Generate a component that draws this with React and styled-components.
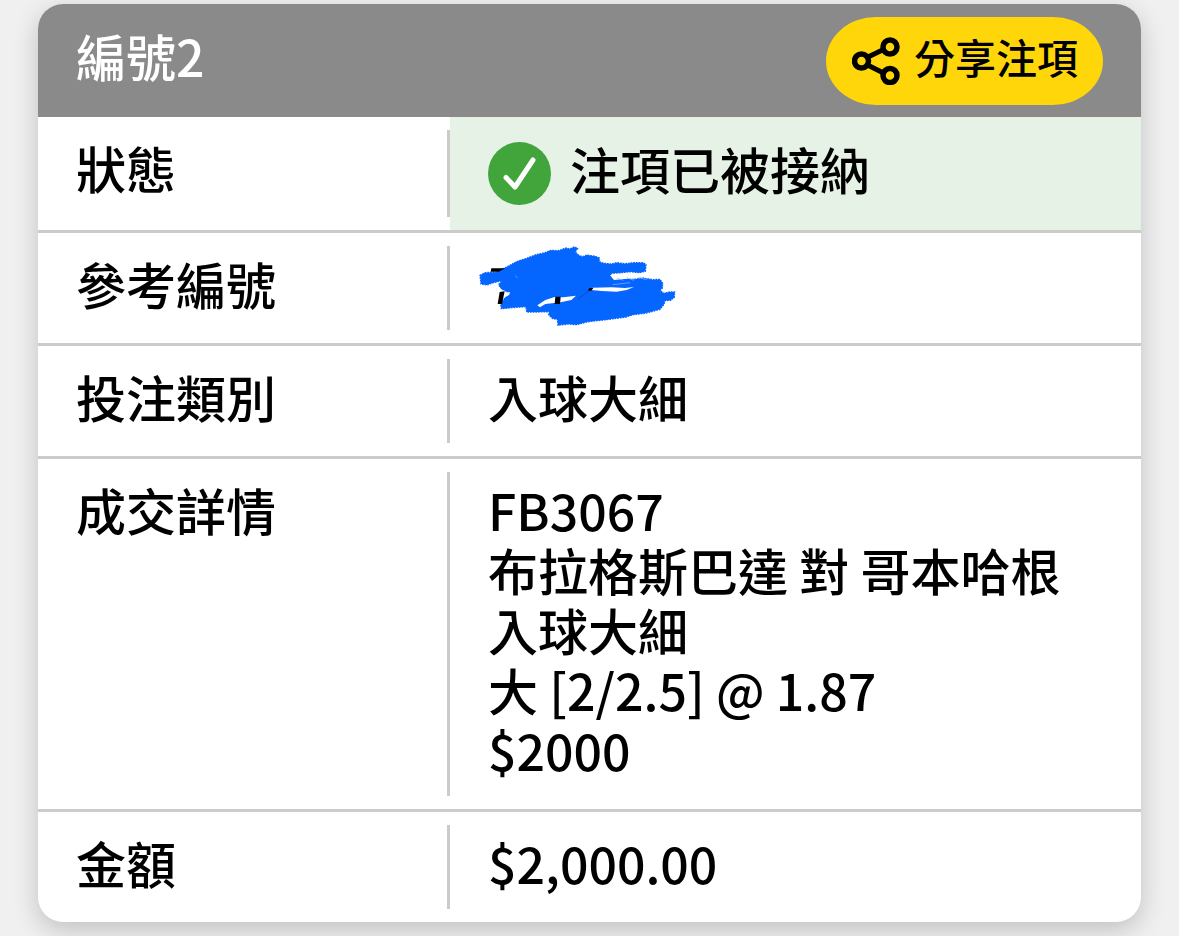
import React from 'react';
import styled, { createGlobalStyle } from 'styled-components';

const GlobalStyle = createGlobalStyle`
  * {
    box-sizing: border-box;
  }

  body {
    margin: 0;
    background: #f0f0f0;
    color: #000;
    font-family: "Noto Sans CJK TC", "Noto Sans", sans-serif;
    font-size: 50px;
    font-weight: 500;
    line-height: 60px;
  }
`;

const Page = styled.main`
  padding: 4px 38px 14px;
`;

const Card = styled.section`
  overflow: hidden;
  border-radius: 25px;
  background: #fff;
  box-shadow: 0 8px 26px rgba(0, 0, 0, 0.2);
`;

const CardHeader = styled.header`
  display: flex;
  justify-content: space-between;
  align-items: flex-start;
  padding: 13px 38px 12px;
  background: #8a8a8a;
`;

const CardTitle = styled.h1`
  margin: 0;
  padding-top: 8px;
  color: #fff;
  font-size: 50px;
  font-weight: 500;
`;

const ShareButton = styled.button`
  display: flex;
  align-items: center;
  gap: 14px;
  height: 88px;
  padding: 0 25px 0 26px;
  border: 0;
  border-radius: 50px / 44px;
  background: #ffd60a;
  color: #000;
  font: inherit;
  font-size: 41px;
  cursor: pointer;
`;

const ShareLabel = styled.span`
  padding-bottom: 10px;
`;

const BetTable = styled.table`
  width: 100%;
  border-spacing: 0;
  table-layout: fixed;

  tr:last-child > * {
    border-bottom: 0;
  }
`;

const Label = styled.th`
  width: 412px;
  padding: 20px 20px 30px 38px;
  border-bottom: 3px solid #cbcbcb;
  /* the divider stops short of the row borders */
  background: linear-gradient(#cbcbcb, #cbcbcb) no-repeat right center / 3px calc(100% - 26px);
  background-origin: padding-box;
  font-weight: 500;
  text-align: left;
  vertical-align: top;
`;

const Value = styled.td`
  padding: ${(props) => (props.$accepted ? '25px 38px' : '20px 38px 30px')};
  border-bottom: 3px solid #cbcbcb;
  background: ${(props) => (props.$accepted ? '#e7f2e7' : 'transparent')};
  vertical-align: top;
`;

const Status = styled.div`
  display: flex;
  align-items: flex-start;
  gap: 19px;
  line-height: 52px;

  svg {
    flex: none;
  }
`;

const Line = styled.div``;

const Redacted = styled.div`
  position: relative;
  height: 60px;

  svg {
    position: absolute;
    top: -9px;
    left: -10px;
  }
`;

const ShareIcon = () => (
  <svg width="48" height="48" viewBox="0 0 48 48" fill="none" stroke="#000" strokeWidth="5" aria-hidden="true">
    <path d="M16 20 L31.5 12.5 M15.5 28 L31.5 36" />
    <circle cx="9.5" cy="24" r="7" strokeWidth="5.5" />
    <circle cx="38" cy="10" r="7" strokeWidth="5.5" />
    <circle cx="38" cy="38.5" r="7" strokeWidth="5.5" />
  </svg>
);

const CheckIcon = () => (
  <svg width="63" height="63" viewBox="0 0 63 63" fill="none" aria-hidden="true">
    <circle cx="31.5" cy="31.5" r="31.5" fill="#41a53c" />
    <path d="M18 35.5 L27 45 L45 18" stroke="#fff" strokeWidth="5" strokeLinecap="round" strokeLinejoin="round" />
  </svg>
);

const Scribble = () => (
  <svg width="200" height="84" viewBox="144 24 600 252" aria-hidden="true">
    <path
      fill="#0465ff"
      stroke="#0465ff"
      strokeWidth="4"
      strokeDasharray="5 3"
      d="M150 118 L165 110 L200 108 L222 97 L240 88 L262 76 L290 67 L318 56 L345 50 L362 43 L385 44 L408 36 L420 39 L432 33
      L443 37 L436 48 L446 58 L458 62 L470 57 L496 61 L508 66 L507 77 L522 82 L545 84 L560 80 L585 83 L610 80 L640 80 L648 86
      L646 106 L628 110 L600 107 L575 110 L545 112 L541 122 L552 130 L580 127 L612 130 L640 126 L668 131 L690 130 L698 142
      L697 156 L690 164 L702 172 L718 168 L734 168 L733 184 L722 193 L705 194 L702 205 L690 220 L668 226 L645 232 L610 236
      L585 244 L560 247 L530 251 L500 254 L470 258 L440 266 L415 264 L384 268 L382 250 L368 248 L356 236 L358 227 L320 228
      L290 228 L288 212 L260 214 L214 218 L212 204 L226 184 L240 176 L226 164 L212 158 L206 146 L216 134 L190 140 L170 147 L153 144 Z"
    />
    {/* gaps between the strokes */}
    <path d="M488 155 L545 154 L585 156 L612 153 L590 162 L560 167 L515 165 L484 162 Z" fill="#fff" />
    <path d="M322 208 L346 192 L374 183 L400 184 L438 179 L424 192 L392 199 L366 202 L346 204 L330 214 Z" fill="#fff" />
    <path d="M222 170 L240 168 L238 176 L224 184 Z M206 150 L214 160 L210 172 L200 172 Z" fill="#fff" />
    <path d="M540 117 L570 116 L610 122 L640 120 L612 127 L575 130 L552 132 Z" fill="#fff" />
    <path
      d="M548 146 L600 140 M560 126 L580 133 M590 125 L612 133 M625 124 L650 131 M256 120 L263 125"
      stroke="#8fb8ff"
      strokeWidth="2"
    />
    {/* what is left of the number */}
    <path d="M184 97 H226 L206 107 H182 Z M209 168 L224 166 L216 204 H203 Z M376 182 H392 L390 204 H374 Z M478 156 H490 L484 164 H474 Z" fill="#000" />
    <path d="M476 164 L444 190" stroke="#0a3f9e" strokeWidth="2" />
  </svg>
);

const details = [
  'FB3067',
  '布拉格斯巴達 對 哥本哈根',
  '入球大細',
  '大 [2/2.5] @ 1.87',
  '$2000',
];

const App = () => {
  return (
    <Page>
      <GlobalStyle />
      <Card>
        <CardHeader>
          <CardTitle>編號2</CardTitle>
          <ShareButton type="button">
            <ShareIcon />
            <ShareLabel>分享注項</ShareLabel>
          </ShareButton>
        </CardHeader>

        <BetTable>
          <tbody>
            <tr>
              <Label scope="row">狀態</Label>
              <Value $accepted>
                <Status>
                  <CheckIcon />
                  <span>注項已被接納</span>
                </Status>
              </Value>
            </tr>
            <tr>
              <Label scope="row">參考編號</Label>
              <Value>
                <Redacted>
                  <Scribble />
                </Redacted>
              </Value>
            </tr>
            <tr>
              <Label scope="row">投注類別</Label>
              <Value>入球大細</Value>
            </tr>
            <tr>
              <Label scope="row">成交詳情</Label>
              <Value>
                {details.map((line) => (
                  <Line key={line}>{line}</Line>
                ))}
              </Value>
            </tr>
            <tr>
              <Label scope="row">金額</Label>
              <Value>$2,000.00</Value>
            </tr>
          </tbody>
        </BetTable>
      </Card>
    </Page>
  );
};

export default App;
